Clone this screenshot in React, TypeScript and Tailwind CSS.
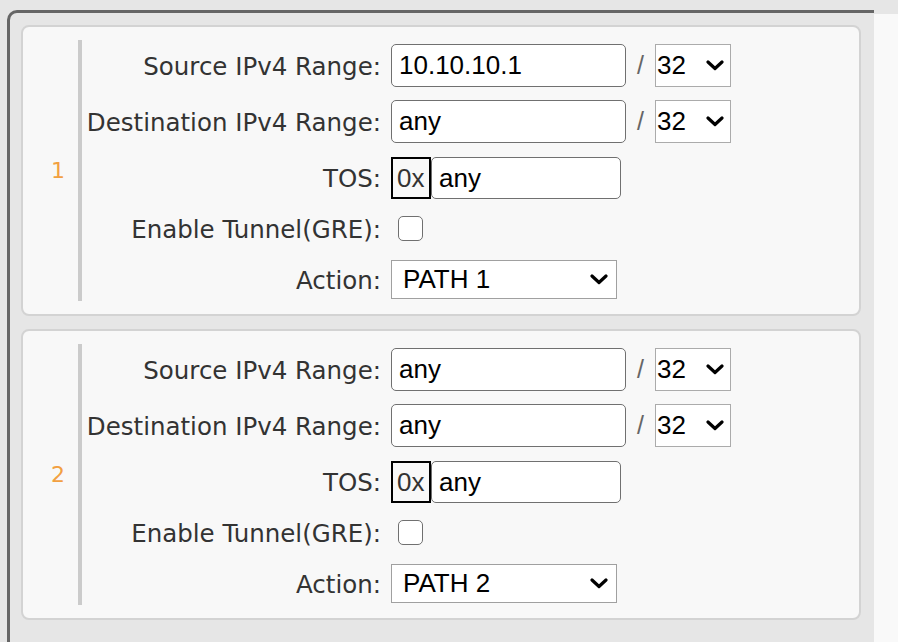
import React from "react";

const labelFont = { fontFamily: '"DejaVu Sans", Verdana, sans-serif' };
const ctrlFont = { fontFamily: '"Liberation Sans", Arial, sans-serif' };

function Chevron() {
  return (
    <svg width="18" height="11" viewBox="0 0 18 11" className="shrink-0">
      <polyline points="2,2 9,8.5 16,2" fill="none" stroke="#000" strokeWidth="3.2" strokeLinecap="round" strokeLinejoin="round" />
    </svg>
  );
}

function Label({ children }: { children: React.ReactNode }) {
  return (
    <div className="w-[299px] shrink-0 pt-[3px] text-right text-[24.5px] leading-none text-[#333] whitespace-nowrap" style={labelFont}>
      {children}
    </div>
  );
}

function TextBox({ value, w, h }: { value: string; w: string; h: string }) {
  return (
    <div className={`${w} ${h} shrink-0 flex items-center bg-white border border-[#707070] rounded-[5px] pl-[7px] text-[26px] text-black`} style={ctrlFont}>
      {value}
    </div>
  );
}

function Mask() {
  return (
    <div className="w-[76px] h-[43px] shrink-0 flex items-center justify-between bg-white border border-[#ababab] pl-[1px] pr-[6px] text-[26px] text-black" style={ctrlFont}>
      <span>32</span>
      <Chevron />
    </div>
  );
}

function Rule({ n, src, action }: { n: number; src: string; action: string }) {
  return (
    <div className="h-[291px] shrink-0 flex border-2 border-[#d3d3d3] rounded-[8px] bg-[#f8f8f8] pl-[15px] py-[13px]">
      <div className="w-[40px] shrink-0 flex items-center justify-center text-[22px] text-[#f2a041]" style={labelFont}>
        {n}
      </div>
      <div className="border-l-4 border-[#cbcbcb] flex flex-col pt-[4px] pb-[2px]">
        <div className="h-[43px] flex items-center gap-[10px]">
          <Label>Source IPv4 Range:</Label>
          <div className="flex items-center">
            <TextBox value={src} w="w-[235px]" h="h-[43px]" />
            <span className="w-[29px] text-center text-[25px] text-[#666]" style={ctrlFont}>/</span>
            <Mask />
          </div>
        </div>
        <div className="h-[43px] mt-[13px] flex items-center gap-[10px]">
          <Label>Destination IPv4 Range:</Label>
          <div className="flex items-center">
            <TextBox value="any" w="w-[235px]" h="h-[43px]" />
            <span className="w-[29px] text-center text-[25px] text-[#666]" style={ctrlFont}>/</span>
            <Mask />
          </div>
        </div>
        <div className="h-[42px] mt-[14px] flex items-center gap-[10px]">
          <Label>TOS:</Label>
          <div className="flex items-center">
            <div className="w-[40px] h-[42px] shrink-0 flex items-center border-2 border-black pl-[4px] text-[26px] text-[#333]" style={ctrlFont}>
              0x
            </div>
            <TextBox value="any" w="w-[190px]" h="h-[42px]" />
          </div>
        </div>
        <div className="h-[25px] mt-[17px] flex items-center gap-[10px]">
          <Label>Enable Tunnel(GRE):</Label>
          <div className="ml-[7px] w-[25px] h-[25px] rounded-[5px] border border-[#707070] bg-white" />
        </div>
        <div className="h-[39px] mt-[19px] flex items-center gap-[10px]">
          <Label>Action:</Label>
          <div className="w-[226px] h-[39px] flex items-center justify-between bg-white border border-[#a0a0a0] pl-[11px] pr-[8px] text-[26px] text-black" style={ctrlFont}>
            <span>{action}</span>
            <Chevron />
          </div>
        </div>
      </div>
    </div>
  );
}

export default function App() {
  return (
    <div className="w-[898px] h-[642px] bg-[#e6e6e6] flex overflow-hidden">
      <div className="ml-[7px] mt-[10px] w-[867px] shrink-0 border-t-[3px] border-l-[3px] border-[#666] rounded-tl-[10px] pt-[12px] pl-[11px] pr-[13px] flex flex-col gap-[13px]">
        <Rule n={1} src="10.10.10.1" action="PATH 1" />
        <Rule n={2} src="any" action="PATH 2" />
      </div>
      <div className="mt-[14px] flex-1 bg-[#f9f9f9]" />
    </div>
  );
}
